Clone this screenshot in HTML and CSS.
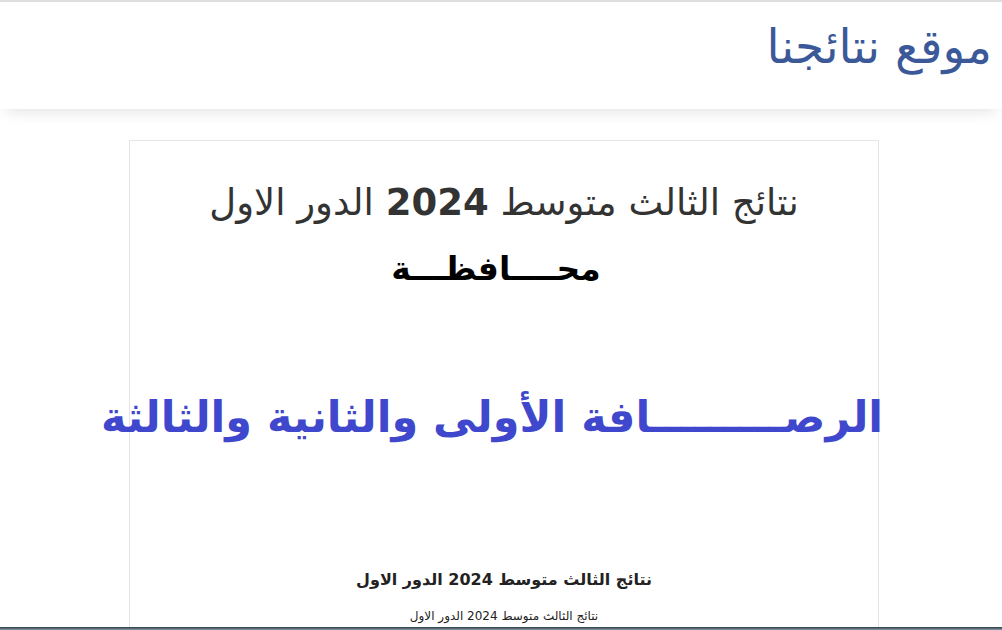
FILE: index.html
```html
<!DOCTYPE html>
<html lang="ar" dir="rtl">
<head>
<meta charset="utf-8">
<title>موقع نتائجنا</title>
<link rel="stylesheet" href="styles.css">
</head>
<body>
<header class="site-header">
  <h1 class="site-title">موقع نتائجنا</h1>
</header>
<main class="card">
  <h2 class="post-title">نتائج الثالث متوسط <b>2024</b> الدور الاول</h2>
  <p class="gov">محــــافظـــة</p>
  <p class="region">الرصـــــــــافة الأولى والثانية والثالثة</p>
  <p class="sub1">نتائج الثالث متوسط 2024 الدور الاول</p>
  <p class="sub2">نتائج الثالث متوسط 2024 الدور الاول</p>
</main>
<div class="taskbar"></div>
</body>
</html>
```

FILE: styles.css
```css
html, body {
  margin: 0;
  padding: 0;
  background: #fff;
  overflow: hidden;
  height: 630px;
}
body {
  font-family: "DejaVu Sans", "Noto Sans", sans-serif;
  border-top: 2px solid #dedede;
  box-sizing: border-box;
}
.site-header {
  height: 107px;
  background: #fff;
  box-shadow: 0 8px 14px -6px rgba(0,0,0,0.12);
  padding: 0 10px 0 0;
  position: relative;
  z-index: 1;
}
.site-title {
  margin: 0;
  padding-top: 16px;
  font-size: 47px;
  font-weight: normal;
  color: #3b5998;
  line-height: 58px;
}
.card {
  width: 750px;
  margin: 31px auto 0;
  border: 1px solid #e5e5e5;
  border-bottom: 0;
  text-align: center;
  height: 490px;
  box-sizing: border-box;
  position: relative;
  left: 3px;
}
.post-title {
  margin: 36px 0 0;
  font-size: 37px;
  font-weight: normal;
  color: #333;
  line-height: 52px;
}
.post-title b { font-weight: bold; }
.gov {
  margin: 16px 0 0;
  font-weight: bold;
  font-size: 33px;
  line-height: 48px;
  color: #000;
  padding-right: 16px;
}
.region {
  margin: 92px -88px 0 -112px;
  font-weight: bold;
  font-size: 43px;
  line-height: 64px;
  color: #3f48cc;
  white-space: nowrap;
}
.sub1 {
  margin: 120px 0 0;
  font-size: 16px;
  font-weight: bold;
  color: #222;
  line-height: 22px;
}
.sub2 {
  margin: 17px 0 0;
  font-size: 12px;
  color: #222;
  line-height: 16px;
}
.taskbar {
  position: fixed;
  left: 0;
  right: 0;
  bottom: 0;
  height: 3px;
  background: linear-gradient(#2a3a44, #8a9aa8);
}
```
